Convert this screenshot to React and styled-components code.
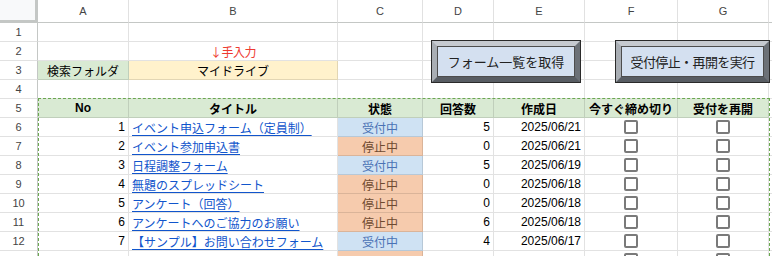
import React from 'react';
import styled, { createGlobalStyle } from 'styled-components';

const GlobalStyle = createGlobalStyle`
  html, body {
    margin: 0;
    padding: 0;
    overflow: hidden;
    background: #fff;
  }
  body {
    font-family: "Liberation Sans", "Noto Sans CJK JP", sans-serif;
  }
`;

const COLUMNS = ['A', 'B', 'C', 'D', 'E', 'F', 'G', ''];

const forms = [
  { no: 1, title: 'イベント申込フォーム（定員制）', open: true, count: 5, date: '2025/06/21' },
  { no: 2, title: 'イベント参加申込書', open: false, count: 0, date: '2025/06/21' },
  { no: 3, title: '日程調整フォーム', open: true, count: 5, date: '2025/06/19' },
  { no: 4, title: '無題のスプレッドシート', open: false, count: 0, date: '2025/06/18' },
  { no: 5, title: 'アンケート（回答）', open: false, count: 0, date: '2025/06/18' },
  { no: 6, title: 'アンケートへのご協力のお願い', open: false, count: 6, date: '2025/06/18' },
  { no: 7, title: '【サンプル】お問い合わせフォーム', open: true, count: 4, date: '2025/06/17' },
  { no: 8, title: '', open: false, count: '', date: '' },
];

const Sheet = styled.div`
  position: relative;
  width: 772px;
  height: 256px;
  overflow: hidden;
`;

const Grid = styled.div`
  display: grid;
  grid-template-columns: 38px 91px 209px 85px 71px 91px 93px 91px 1fr;
  grid-template-rows: 23px;
  grid-auto-rows: 19px;
`;

const Corner = styled.div`
  box-sizing: border-box;
  background: #f8f9fa;
  border-right: 3px solid #c4c7c5;
  border-bottom: 3px solid #c4c7c5;
`;

const ColHeader = styled.div`
  box-sizing: border-box;
  display: flex;
  align-items: center;
  justify-content: center;
  font-size: 11px;
  color: #444;
  border-right: 1px solid #e1e1e1;
  border-bottom: 1px solid #c4c7c5;
`;

const RowHeader = styled.div`
  box-sizing: border-box;
  display: flex;
  align-items: center;
  justify-content: center;
  font-size: 11px;
  color: #444;
  border-right: 1px solid #c4c7c5;
  border-bottom: 1px solid #e1e1e1;
`;

const Cell = styled.div`
  box-sizing: border-box;
  display: flex;
  align-items: center;
  justify-content: ${({ $align }) =>
    $align === 'right' ? 'flex-end' : $align === 'left' ? 'flex-start' : 'center'};
  padding: 0 3px;
  background: ${({ $bg }) => $bg || '#fff'};
  color: ${({ $color }) => $color || '#000'};
  font-size: 12px;
  font-weight: ${({ $bold }) => ($bold ? 700 : 400)};
  white-space: nowrap;
  overflow: hidden;
  border-right: 1px solid rgba(0, 0, 0, 0.115);
  border-bottom: 1px solid rgba(0, 0, 0, 0.115);
`;

const Note = styled.span`
  color: #ee3a30;
  font-family: "Noto Sans CJK JP", sans-serif;
  font-size: 12px;
  letter-spacing: -0.5px;
`;

const Link = styled.a`
  color: #1155cc;
  text-decoration: underline;
  text-underline-offset: 2px;
`;

const Checkbox = styled.span`
  box-sizing: border-box;
  width: 14px;
  height: 14px;
  border: 2px solid #7a7a7a;
  border-radius: 2px;
  background: #fff;
`;

const Drawing = styled.div`
  position: absolute;
  left: ${({ $x }) => $x}px;
  top: 40px;
  width: ${({ $w }) => $w}px;
  height: 43px;
  box-sizing: border-box;
  border: 1px solid #2a2a2a;
  display: flex;
`;

const Bevel = styled.div`
  flex: 1;
  display: flex;
  border-style: solid;
  border-width: 5px;
  border-color: #c6cad0 #6c7177 #585d63 #a9aeb4;
`;

const Face = styled.div`
  flex: 1;
  display: flex;
  align-items: center;
  justify-content: center;
  background: #d4e0f0;
  border: 1px solid #4d4d4d;
  font-size: 13px;
  letter-spacing: ${({ $tight }) => ($tight ? '-0.6px' : '0')};
  color: #222;
  font-family: "Noto Sans CJK JP", sans-serif;
`;

const CopyRange = styled.div`
  position: absolute;
  left: 38px;
  top: 98px;
  right: 2px;
  bottom: -10px;
  border: 1px dashed #6aa84f;
  pointer-events: none;
`;

const GREEN = '#d9ead3';
const OPEN_BG = '#cfe2f3';
const STOP_BG = '#f6cbad';

const Blank = ({ n }) =>
  Array.from({ length: n }, (_, i) => <Cell key={i} />);

const App = () => {
  return (
    <>
      <GlobalStyle />
      <Sheet>
        <Grid>
          <Corner />
          {COLUMNS.map((c, i) => (
            <ColHeader key={i}>{c}</ColHeader>
          ))}

          <RowHeader>1</RowHeader>
          <Blank n={8} />

          <RowHeader>2</RowHeader>
          <Cell />
          <Cell>
            <Note>↓手入力</Note>
          </Cell>
          <Blank n={6} />

          <RowHeader>3</RowHeader>
          <Cell $bg={GREEN}>検索フォルダ</Cell>
          <Cell $bg="#fff2cc">マイドライブ</Cell>
          <Blank n={6} />

          <RowHeader>4</RowHeader>
          <Blank n={8} />

          <RowHeader>5</RowHeader>
          <Cell $bg={GREEN} $bold>No</Cell>
          <Cell $bg={GREEN} $bold>タイトル</Cell>
          <Cell $bg={GREEN} $bold>状態</Cell>
          <Cell $bg={GREEN} $bold>回答数</Cell>
          <Cell $bg={GREEN} $bold>作成日</Cell>
          <Cell $bg={GREEN} $bold>今すぐ締め切り</Cell>
          <Cell $bg={GREEN} $bold>受付を再開</Cell>
          <Cell />

          {forms.map((f) => (
            <React.Fragment key={f.no}>
              {/* the last row is cut by the window edge, its label is out of view */}
              <RowHeader>{f.title ? f.no + 5 : ''}</RowHeader>
              <Cell $align="right">{f.title ? f.no : ''}</Cell>
              <Cell $align="left">
                {f.title && <Link href="#">{f.title}</Link>}
              </Cell>
              <Cell
                $bg={f.open ? OPEN_BG : STOP_BG}
                $color={f.open ? '#4a72b5' : '#6e4a30'}
              >
                {f.title ? (f.open ? '受付中' : '停止中') : ''}
              </Cell>
              <Cell $align="right">{f.count}</Cell>
              <Cell $align="right">{f.date}</Cell>
              <Cell>
                <Checkbox />
              </Cell>
              <Cell>
                <Checkbox />
              </Cell>
              <Cell />
            </React.Fragment>
          ))}
        </Grid>

        <CopyRange />

        <Drawing $x={431} $w={150}>
          <Bevel>
            <Face>フォーム一覧を取得</Face>
          </Bevel>
        </Drawing>
        <Drawing $x={615} $w={155}>
          <Bevel>
            <Face $tight>受付停止・再開を実行</Face>
          </Bevel>
        </Drawing>
      </Sheet>
    </>
  );
};

export default App;
